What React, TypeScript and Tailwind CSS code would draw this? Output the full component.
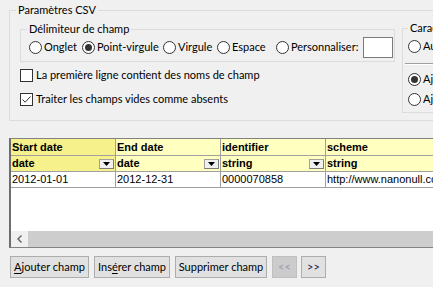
import React from "react";

const label = "font-['Lato',sans-serif] text-[11px] text-black";
const grid = "font-['Liberation_Sans',Arial,sans-serif] text-[11px] text-black";

function Radio({ text, checked, w }: { text: string; checked?: boolean; w?: string }) {
  return (
    <div className={`flex items-center gap-[2px] shrink-0 ${w ?? ""}`}>
      <span className="w-[13px] h-[13px] rounded-full border border-[#333333] bg-white flex items-center justify-center shrink-0">
        {checked && <span className="w-[7px] h-[7px] rounded-full bg-[#333333]" />}
      </span>
      <span className="whitespace-nowrap">{text}</span>
    </div>
  );
}

function Checkbox({ text, checked }: { text: string; checked?: boolean }) {
  return (
    <div className="flex items-center gap-[3px] h-[16px]">
      <span className="w-[13px] h-[13px] border border-[#333333] bg-white flex items-center justify-center shrink-0">
        {checked && (
          <svg width="11" height="11" viewBox="0 0 11 11">
            <path d="M1.5 5.5 L4.2 8.2 L9.5 2.5" fill="none" stroke="#333333" strokeWidth="1" />
          </svg>
        )}
      </span>
      <span className="whitespace-nowrap">{text}</span>
    </div>
  );
}

function DropButton() {
  return (
    <span className="ml-auto mr-[1px] w-[15px] h-[10px] border border-[#a0a0a0] border-b-[#7a7a7a] border-r-[#7a7a7a] bg-[#f0f0f0] flex items-center justify-center">
      <svg width="7" height="4" viewBox="0 0 7 4">
        <path d="M0 0 H7 L3.5 4 Z" fill="#000" />
      </svg>
    </span>
  );
}

const columns = [
  { name: "Start date", type: "date", value: "2012-01-01", active: true },
  { name: "End date", type: "date", value: "2012-12-31" },
  { name: "identifier", type: "string", value: "0000070858" },
  { name: "scheme", type: "string", value: "http://www.nanonull.com/schemes/identifier", last: true },
];

export default function App() {
  return (
    <div className={`w-[433px] h-[287px] overflow-hidden bg-[#f0f0f0] ${label}`}>
      <div className="pl-[9px] pt-[2px]">
        {/* Paramètres CSV */}
        <fieldset className="w-[620px] h-[119px] shrink-0 border border-[#dcdcdc]">
          <legend className="ml-[6px] px-[2px] leading-[16px]">Paramètres CSV</legend>
          <div className="flex pl-[10px]">
            <div className="w-[375px] shrink-0">
              <fieldset className="mt-[3px] w-[375px] border border-[#dcdcdc] pb-[4px]">
                <legend className="ml-[6px] px-[2px] leading-[16px]">Délimiteur de champ</legend>
                <div className="flex items-center h-[20px] pl-[8px]">
                  <Radio text="Onglet" w="w-[53px]" />
                  <Radio text="Point-virgule" checked w="w-[81px]" />
                  <Radio text="Virgule" w="w-[54px]" />
                  <Radio text="Espace" w="w-[59px]" />
                  <Radio text="Personnaliser:" w="w-[87px]" />
                  <span className="w-[30px] h-[21px] border border-[#7a7a7a] bg-white shrink-0" />
                </div>
              </fieldset>
              <div className="mt-[5px]">
                <Checkbox text="La première ligne contient des noms de champ" />
              </div>
              <div className="mt-[8px]">
                <Checkbox text="Traiter les champs vides comme absents" checked />
              </div>
            </div>

            <fieldset className="ml-[7px] mt-[2px] w-[200px] h-[93px] shrink-0 border border-[#dcdcdc]">
              <legend className="ml-[5px] px-[2px] leading-[16px]">Caractère de texte</legend>
              <div className="flex items-center h-[20px] pl-[5px]">
                <Radio text="Automatique" />
              </div>
              <div className="mt-[7px] mx-[2px] border-t border-[#a0a0a0] border-b border-b-white" />
              <div className="mt-[4px] flex items-center h-[20px] pl-[5px]">
                <Radio text="Ajouter des guillemets" checked />
              </div>
              <div className="flex items-center h-[20px] pl-[5px]">
                <Radio text="Ajuster les espaces" />
              </div>
            </fieldset>
          </div>
        </fieldset>

        {/* Grid */}
        <div className={`mt-[17px] w-[480px] h-[110px] border border-[#828282] border-l-2 border-l-[#6d6d6d] flex flex-col bg-white ${grid}`}>
          <div className="flex h-[17px] border-b border-[#a0a0a0] font-bold leading-[16px]">
            {columns.map((c) => (
              <div
                key={c.name}
                className={`pl-[1px] whitespace-nowrap overflow-hidden ${c.last ? "flex-1" : "w-[105px] border-r border-[#a0a0a0]"} ${c.active ? "bg-[#f6f18a]" : "bg-[#ffffc0]"}`}
              >
                {c.name}
              </div>
            ))}
          </div>
          <div className="flex h-[16px] border-b border-[#a0a0a0] font-bold leading-[15px]">
            {columns.map((c) => (
              <div
                key={c.name}
                className={`pl-[1px] flex items-center whitespace-nowrap overflow-hidden ${c.last ? "flex-1" : "w-[105px] border-r border-[#a0a0a0]"} ${c.active ? "bg-[#f6f18a]" : "bg-[#ffffc0]"}`}
              >
                <span>{c.type}</span>
                {!c.last && <DropButton />}
              </div>
            ))}
          </div>
          <div className="flex h-[16px] border-b border-[#a0a0a0] leading-[15px]">
            {columns.map((c) => (
              <div
                key={c.name}
                className={`pl-[1px] whitespace-nowrap overflow-hidden bg-white ${c.last ? "flex-1" : "w-[105px] border-r border-[#a0a0a0]"}`}
              >
                {c.value}
              </div>
            ))}
          </div>
          <div className="flex-1" />
          <div className="flex h-[16px] shrink-0">
            <div className="w-[17px] bg-[#f0f0f0] flex items-center justify-center">
              <svg width="5" height="8" viewBox="0 0 5 8">
                <path d="M4.5 0.5 L1 4 L4.5 7.5" fill="none" stroke="#606060" strokeWidth="1.4" />
              </svg>
            </div>
            <div className="flex-1 bg-[#cdcdcd]" />
          </div>
        </div>
      </div>

      {/* Buttons */}
      <div className="flex mt-[8px] pl-[10px]">
        <button className="w-[79px] h-[22px] bg-[#e1e1e1] border border-[#adadad] whitespace-nowrap">
          <span className="underline underline-offset-2">A</span>jouter champ
        </button>
        <button className="ml-[5px] w-[76px] h-[22px] bg-[#e1e1e1] border border-[#adadad] whitespace-nowrap">
          Ins<span className="underline underline-offset-2">é</span>rer champ
        </button>
        <button className="ml-[5px] w-[92px] h-[22px] bg-[#e1e1e1] border border-[#adadad] whitespace-nowrap">
          Supprimer champ
        </button>
        <button disabled className="ml-[5px] w-[25px] h-[22px] bg-[#cccccc] border border-[#bfbfbf] text-[#9a9ab0]">
          &lt;&lt;
        </button>
        <button className="ml-[4px] w-[25px] h-[22px] bg-[#e1e1e1] border border-[#adadad] text-[#1a1a4a]">
          &gt;&gt;
        </button>
      </div>
    </div>
  );
}
